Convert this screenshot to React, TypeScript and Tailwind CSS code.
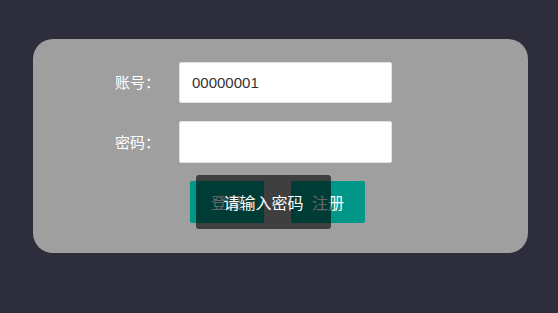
// LoginCard — account/password form with a toast over the buttons
import { useState } from "react";

const cjk = { fontFamily: '"Microsoft YaHei", "Noto Sans CJK SC", sans-serif' };

export default function App() {
  const [account, setAccount] = useState("00000001");
  const [password, setPassword] = useState("");

  return (
    <div className="min-h-screen w-full bg-[#2e2d3c] pl-[33px] pt-[39px]" style={cjk}>
      <div className="relative h-[214px] w-[495px] rounded-[20px] bg-[#9f9f9f] pt-[23px]">
        <div className="flex items-center pl-[82px]">
          <label className="w-[64px] text-[15px] text-white">账号：</label>
          <input
            type="text"
            value={account}
            onChange={(e) => setAccount(e.target.value)}
            className="h-[41px] w-[213px] rounded-[2px] border border-[#e2e2e2] bg-white px-3 text-[15px] text-[#333] outline-none"
            style={{ fontFamily: '"Liberation Sans", Arial, sans-serif' }}
          />
        </div>

        <div className="mt-[18px] flex items-center pl-[82px]">
          <label className="w-[64px] text-[15px] text-white">密码：</label>
          <input
            type="password"
            value={password}
            onChange={(e) => setPassword(e.target.value)}
            className="h-[42px] w-[213px] rounded-[2px] border border-[#e2e2e2] bg-white px-3 text-[15px] outline-none"
          />
        </div>

        <div className="mt-[18px] flex gap-[27px] pl-[157px]">
          <button className="h-[42px] w-[74px] rounded-[2px] bg-[#009688] text-[16px] text-white">
            登录
          </button>
          <button className="h-[42px] w-[74px] rounded-[2px] bg-[#009688] text-[16px] text-white">
            注册
          </button>
        </div>

        {/* toast */}
        <div className="absolute left-[163px] top-[136px] flex h-[54px] w-[135px] items-center justify-center rounded-[3px] bg-black/60 text-[16px] text-white">
          请输入密码
        </div>
      </div>
    </div>
  );
}
